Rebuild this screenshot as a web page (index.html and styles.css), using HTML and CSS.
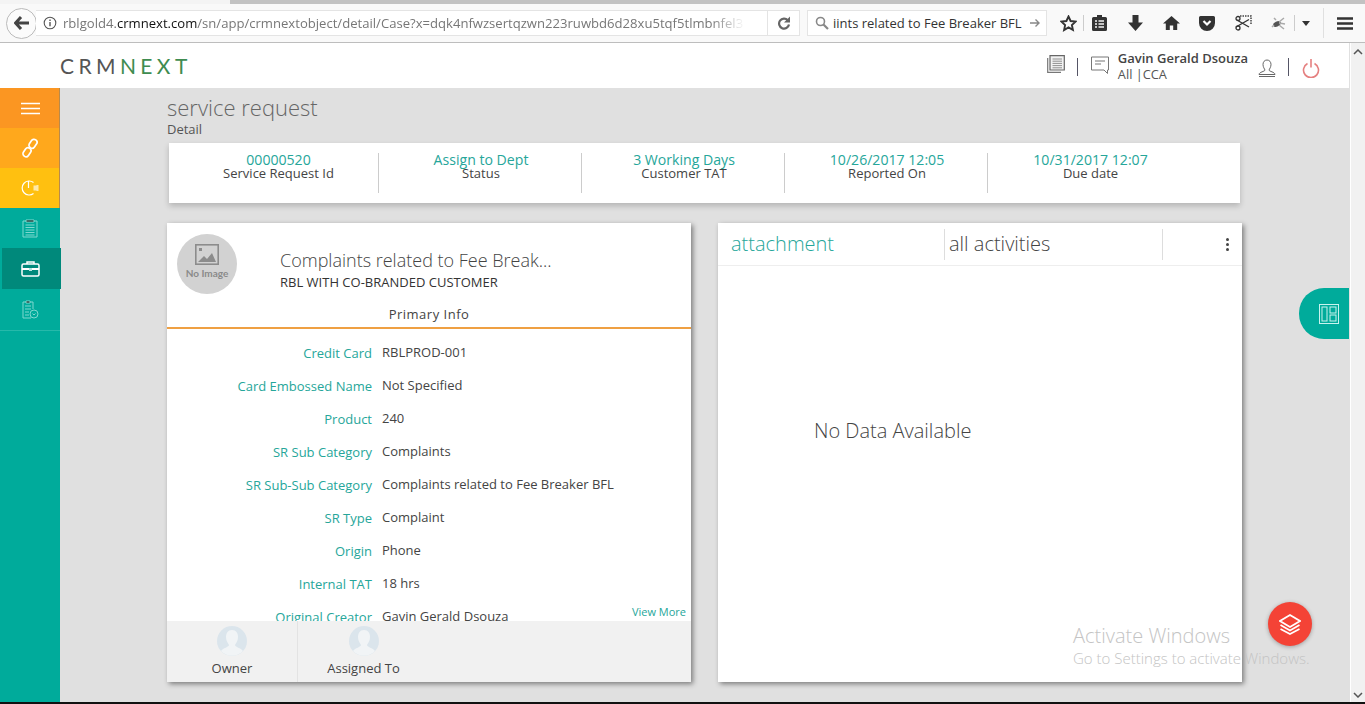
FILE: index.html
```html
<!DOCTYPE html>
<html lang="en">
<head>
    <meta charset="UTF-8">
    <title>service request</title>
    <link rel="stylesheet" href="styles.css">
</head>
<body>

<div class="tabstrip"><div class="tab-edge"></div></div>

<div class="toolbar">
    <div class="back-btn">
        <svg width="16" height="14" viewBox="0 0 16 14"><path d="M7 1 1.500 7 7 13M2 7h13" fill="none" stroke="#444" stroke-width="3"/></svg>
    </div>
    <div class="url-box">
        <svg class="info-icon" width="14" height="14" viewBox="0 0 14 14"><circle cx="7" cy="7" r="5.800" fill="none" stroke="#555" stroke-width="1.100"/><path d="M7 6v4.200M7 3.600v1.300" stroke="#555" stroke-width="1.400"/></svg>
        <div class="url-text">rblgold4.<b>crmnext.com</b>/sn/app/crmnextobject/detail/Case?x=dqk4nfwzsertqzwn223ruwbd6d28xu5tqf5tlmbnfel3</div>
        <div class="reload-cell">
            <svg width="14" height="14" viewBox="0 0 14 14"><path d="M10.800 4.200A5 5 0 1 0 12 8.500" fill="none" stroke="#666" stroke-width="2.200"/><path d="M13 .5v6H7z" fill="#666"/></svg>
        </div>
    </div>
    <div class="search-box">
        <svg width="14" height="14" viewBox="0 0 14 14"><circle cx="5.500" cy="5.500" r="4" fill="none" stroke="#888" stroke-width="1.600"/><path d="m8.500 8.500 4.500 4.500" stroke="#888" stroke-width="2.200"/></svg>
        <div class="search-text">iints related to Fee Breaker BFL</div>
        <svg width="12" height="12" viewBox="0 0 12 12"><path d="M1 6h9M6.500 2.500 10 6l-3.500 3.500" fill="none" stroke="#888" stroke-width="1.400"/></svg>
    </div>
    <div class="tool-icons">
        <div class="tool-cell cell-star">
            <svg width="17" height="17" viewBox="0 0 17 17"><path d="m8.500 1.500 2.100 4.500 4.900.6-3.600 3.400 1 4.900-4.400-2.500L4.100 15l1-4.900-3.600-3.500 4.900-.6z" fill="none" stroke="#333" stroke-width="1.900"/></svg>
        </div>
        <span class="tool-sep"></span>
        <div class="tool-cell cell-clip">
            <svg width="15" height="16" viewBox="0 0 15 16"><path d="M5 0h5v2h3.500A1.500 1.500 0 0 1 15 3.500v11a1.500 1.500 0 0 1-1.500 1.500h-12A1.500 1.500 0 0 1 0 14.500v-11A1.500 1.500 0 0 1 1.500 2H5z" fill="#333"/><path d="M3 6h2M6.500 6H12M3 9h2M6.500 9H12M3 12h2M6.500 12H12" stroke="#f4f4f4" stroke-width="1.300"/></svg>
        </div>
        <div class="tool-cell">
            <svg width="15" height="16" viewBox="0 0 15 16"><path d="M4.500 0h6v7.500H15L7.500 16 0 7.500h4.500z" fill="#333"/></svg>
        </div>
        <div class="tool-cell">
            <svg width="17" height="16" viewBox="0 0 17 16"><path d="M8.500 1 0 8.500h2.800V15h4v-4.500h3.400V15h4V8.500H17z" fill="#333"/></svg>
        </div>
        <div class="tool-cell">
            <svg width="16" height="15" viewBox="0 0 16 15"><path d="M1.500 0h13A1.500 1.500 0 0 1 16 1.500V7A8 8 0 0 1 0 7V1.500A1.500 1.500 0 0 1 1.500 0z" fill="#333"/><path d="m4.500 5 3.500 3.500L11.500 5" fill="none" stroke="#fff" stroke-width="2.200"/></svg>
        </div>
        <div class="tool-cell">
            <svg width="17" height="16" viewBox="0 0 17 16"><path d="M5 1h11v9" fill="none" stroke="#444" stroke-width="1.500" stroke-dasharray="1.500 1"/><path d="m1 4.500 13 7.500M1 12l13-7.500" stroke="#333" stroke-width="1.400"/><circle cx="3" cy="3.500" r="2" fill="none" stroke="#333" stroke-width="1.300"/><circle cx="3" cy="13" r="2" fill="none" stroke="#333" stroke-width="1.300"/></svg>
        </div>
        <div class="tool-cell cell-fly">
            <svg width="16" height="13" viewBox="0 0 16 13"><ellipse cx="6" cy="7" rx="4" ry="2.500" fill="#555" transform="rotate(-25 6 7)"/><path d="M8 5 13 1M8 6l6 1M8 8l5 4M3 8l-2 2M5 3l-2-2" stroke="#aaa" stroke-width="1.500"/></svg>
        </div>
        <span class="tool-sep"></span>
        <div class="tool-cell cell-caret">
            <svg width="8" height="5" viewBox="0 0 8 5"><path d="M0 0h8L4 5z" fill="#333"/></svg>
        </div>
        <span class="tool-sep tall"></span>
        <div class="tool-cell cell-menu">
            <svg width="16" height="13" viewBox="0 0 16 13"><path d="M0 1.500h16M0 6.500h16M0 11.500h16" stroke="#333" stroke-width="2.600"/></svg>
        </div>
    </div>
</div>

<div class="window">
    <div class="page">
        <header class="app-header">
            <div class="logo">CRM<span>NEXT</span></div>
            <div class="header-right">
                <svg class="doc-icon" width="18" height="18" viewBox="0 0 18 18"><path d="M.7 3v14.300H14" fill="none" stroke="#777" stroke-width="1.200"/><path d="M3 .7h14.300V15H3z" fill="#f2f2f2" stroke="#666" stroke-width="1.200"/><path d="M5.500 4h9.500M5.500 6.200h9.500M5.500 8.400h9.500M5.500 10.600h9.500M5.500 12.800h9.500" stroke="#777" stroke-width=".8"/></svg>
                <span class="head-sep"></span>
                <svg class="msg-icon" width="18" height="18" viewBox="0 0 18 18"><path d="M.5 1h17v13h-1v3.500l-3.500-3.500H.5z" fill="none" stroke="#777"/><path d="M4 5h10M4 8h6" stroke="#777"/></svg>
                <div class="user-info">
                    <div class="user-name">Gavin Gerald Dsouza</div>
                    <div class="user-role">All |CCA</div>
                </div>
                <svg class="person-icon" width="18" height="18" viewBox="0 0 18 18"><path d="M9 1c2.500 0 4 2 4 4.500S11.500 10 11 11c0 1.500 6 2 6 4.500H1C1 13 7 12.500 7 11c-.5-1-2-3-2-5.500S6.500 1 9 1zM1 17.500h16" fill="none" stroke="#666"/></svg>
                <span class="head-sep"></span>
                <svg class="power-icon" width="18" height="19" viewBox="0 0 18 19"><path d="M5.500 4.500A7.500 7.500 0 1 0 12.500 4.500M9 0v8.500" fill="none" stroke="#e58080" stroke-width="1.600"/></svg>
            </div>
        </header>

        <div class="body-row">
            <nav class="sidebar">
                <div class="nav-item nav-orange">
                    <svg width="19" height="13" viewBox="0 0 19 13"><path d="M0 1.500h19M0 6.500h19M0 11.500h19" stroke="#fff" stroke-width="1.600"/></svg>
                </div>
                <div class="nav-item nav-amber">
                    <svg width="16" height="20" viewBox="0 0 16 20"><g fill="none" stroke="#fff" stroke-width="1.700"><rect x="8" y="1" width="6" height="9.500" rx="3" transform="rotate(35 11 5.750)"/><rect x="2" y="9.500" width="6" height="9.500" rx="3" transform="rotate(35 5 14.250)"/></g></svg>
                </div>
                <div class="nav-item nav-yellow">
                    <svg width="19" height="16" viewBox="0 0 19 16"><path d="M12.500 2.500A7 7 0 1 0 12.500 13.500M7.500 1v7" fill="none" stroke="#fff" stroke-width="1.200"/><path d="M12.500 5.500h3v-.5h2v6h-2v-.5h-3z" fill="#ffe9a8"/></svg>
                </div>
                <div class="nav-item nav-teal">
                    <svg width="16" height="19" viewBox="0 0 16 19"><path d="M1 2h14v16H1z" fill="none" stroke="#7fd8cf"/><path d="M4 1h8v2H4zM3.500 6h9M3.500 8.500h9M3.500 11h9M3.500 13.500h9M3.500 16h9" stroke="#7fd8cf"/></svg>
                </div>
                <div class="nav-item nav-active">
                    <svg width="19" height="16" viewBox="0 0 19 16"><path d="M6 3V1h7v2" fill="none" stroke="#fff" stroke-width="1.500"/><rect x="1" y="3" width="17" height="12" rx="1.500" fill="none" stroke="#fff" stroke-width="1.500"/><path d="M1 8h17" stroke="#fff" stroke-width="2"/><path d="M8 7h3v3H8z" fill="#b5e6e0"/></svg>
                </div>
                <div class="nav-item nav-teal nav-last">
                    <svg width="17" height="19" viewBox="0 0 17 19"><path d="M11 9V2H1v16h8" fill="none" stroke="#7fd8cf"/><path d="M4 1h4v2H4zM3 6h6M3 9h6M3 12h4M3 15h4" stroke="#7fd8cf"/><circle cx="12" cy="14" r="4" fill="none" stroke="#7fd8cf"/><path d="m10.500 13.500 1.500 1.500 1.500-1.500" fill="none" stroke="#7fd8cf"/></svg>
                </div>
            </nav>

            <main class="main">
                <div class="page-title">service request</div>
                <div class="page-sub">Detail</div>

                <div class="summary">
                    <div class="summary-col"><div class="summary-val">00000520</div><div class="summary-key">Service Request Id</div></div>
                    <div class="summary-col"><div class="summary-val">Assign to Dept</div><div class="summary-key">Status</div></div>
                    <div class="summary-col"><div class="summary-val">3 Working Days</div><div class="summary-key">Customer TAT</div></div>
                    <div class="summary-col"><div class="summary-val">10/26/2017 12:05</div><div class="summary-key">Reported On</div></div>
                    <div class="summary-col"><div class="summary-val">10/31/2017 12:07</div><div class="summary-key">Due date</div></div>
                </div>

                <div class="cards">
                    <section class="card info-card">
                        <div class="info-head">
                            <div class="no-image">
                                <svg width="24" height="21" viewBox="0 0 24 21"><rect x=".8" y=".8" width="22.400" height="19.400" fill="none" stroke="#8c8c8c" stroke-width="1.600"/><path d="M3 18l6-6 3 3 5-6 4 9z" fill="#8c8c8c"/><rect x="4" y="4" width="3" height="3" fill="#8c8c8c"/></svg>
                                <span>No Image</span>
                            </div>
                            <div class="info-titles">
                                <div class="info-title">Complaints related to Fee Break...</div>
                                <div class="info-subtitle">RBL WITH CO-BRANDED CUSTOMER</div>
                            </div>
                        </div>
                        <div class="info-tab">Primary Info</div>
                        <div class="fields">
                            <div class="field"><label>Credit Card</label><span>RBLPROD-001</span></div>
                            <div class="field"><label>Card Embossed Name</label><span>Not Specified</span></div>
                            <div class="field"><label>Product</label><span>240</span></div>
                            <div class="field"><label>SR Sub Category</label><span>Complaints</span></div>
                            <div class="field"><label>SR Sub-Sub Category</label><span>Complaints related to Fee Breaker BFL</span></div>
                            <div class="field"><label>SR Type</label><span>Complaint</span></div>
                            <div class="field"><label>Origin</label><span>Phone</span></div>
                            <div class="field"><label>Internal TAT</label><span>18 hrs</span></div>
                            <div class="field"><label>Original Creator</label><span>Gavin Gerald Dsouza</span></div>
                            <a class="view-more">View More</a>
                        </div>
                        <div class="people">
                            <div class="person person-owner">
                                <svg class="avatar" width="30" height="30" viewBox="0 0 30 30"><circle cx="15" cy="15" r="15" fill="#dbe5ec"/><path d="M15 4c4 0 6 3 6 7s-2 6-3 8c0 2 6 3 8 6a15 15 0 0 1-22 0c2-3 8-4 8-6-1-2-3-4-3-8s2-7 6-7z" fill="#f1f4f6"/></svg>
                                <div>Owner</div>
                            </div>
                            <div class="person person-assigned">
                                <svg class="avatar" width="30" height="30" viewBox="0 0 30 30"><circle cx="15" cy="15" r="15" fill="#dbe5ec"/><path d="M15 4c4 0 6 3 6 7s-2 6-3 8c0 2 6 3 8 6a15 15 0 0 1-22 0c2-3 8-4 8-6-1-2-3-4-3-8s2-7 6-7z" fill="#f1f4f6"/></svg>
                                <div>Assigned To</div>
                            </div>
                        </div>
                    </section>

                    <section class="card activity-card">
                        <div class="activity-tabs">
                            <div class="activity-tab tab-attach">attachment</div>
                            <div class="activity-tab tab-all">all activities</div>
                            <div class="activity-menu"><i></i><i></i><i></i></div>
                        </div>
                        <div class="no-data">No Data Available</div>
                    </section>
                </div>
            </main>
        </div>
    </div>

    <div class="scrollbar">
        <svg width="10" height="6" viewBox="0 0 10 6"><path d="M1 5l4-4 4 4" fill="none" stroke="#555" stroke-width="1.500"/></svg>
        <svg width="10" height="6" viewBox="0 0 10 6"><path d="M1 1l4 4 4-4" fill="none" stroke="#555" stroke-width="1.500"/></svg>
    </div>
</div>

<div class="bottom-edge"></div>

<!-- floating bits -->
<div class="layout-tab">
    <svg width="20" height="20" viewBox="0 0 20 20"><g fill="none" stroke="#c8f3ee" stroke-width="1"><rect x=".5" y=".5" width="19" height="19"/><rect x="3" y="3" width="5" height="14"/><rect x="11" y="3" width="6" height="6"/><rect x="11" y="11" width="6" height="6"/></g></svg>
</div>
<div class="fab">
    <svg width="22" height="22" viewBox="0 0 22 22"><path d="M11 2 21 8l-10 6L1 8z" fill="none" stroke="#fff" stroke-width="1.700"/><path d="m1.500 12 9.500 5.500 9.500-5.500M1.500 16l9.500 5 9.500-5" fill="none" stroke="#fff" stroke-width="1.700"/></svg>
</div>
<div class="watermark">
    <div class="wm-big">Activate Windows</div>
    <div class="wm-small">Go to Settings to activate Windows.</div>
</div>

</body>
</html>
```

FILE: styles.css
```css
html, body {
    margin: 0;
    height: 704px;
    overflow: hidden;
}

body {
    display: flex;
    flex-direction: column;
    font-family: "Open Sans", "Noto Sans", sans-serif;
    color: #444;
    background: #e0e0e0;
    position: relative;
}

/* browser chrome */
.tabstrip {
    height: 4px;
    background: #c2c2c2;
    flex: none;
}

.tab-edge {
    width: 230px;
    height: 4px;
    background: #f4f4f4;
}

.toolbar {
    height: 38px;
    flex: none;
    display: flex;
    align-items: center;
    background: #f9f9f9;
    border-bottom: 1px solid #bdbdbd;
    padding-left: 6px;
}

.back-btn {
    width: 29px;
    height: 29px;
    border: 1px solid #bbb;
    border-radius: 50%;
    background: #fbfbfb;
    display: flex;
    align-items: center;
    justify-content: center;
    flex: none;
    margin-right: -1px;
}

.url-box {
    width: 764px;
    height: 26px;
    flex: none;
    display: flex;
    align-items: center;
    background: #fff;
    border: 1px solid #e4e4e4;
    border-left: none;
    box-sizing: border-box;
    padding-left: 7px;
}

.info-icon {
    flex: none;
}

.url-text {
    width: 682px;
    margin-left: 6px;
    font-size: 13.100px;
    color: #777;
    white-space: nowrap;
    overflow: hidden;
    -webkit-mask-image: linear-gradient(to right, #000 95%, transparent);
    mask-image: linear-gradient(to right, #000 95%, transparent);
}

.url-text b {
    font-weight: 400;
    color: #111;
}

.reload-cell {
    margin-left: 22px;
    flex: 1;
    height: 24px;
    border-left: 1px solid #e4e4e4;
    display: flex;
    align-items: center;
    justify-content: center;
}

.search-box {
    width: 240px;
    height: 26px;
    flex: none;
    margin-left: 7px;
    display: flex;
    align-items: center;
    background: #fff;
    border: 1px solid #e4e4e4;
    box-sizing: border-box;
    padding: 0 5px 0 7px;
    font-size: 13px;
    color: #333;
}

.search-text {
    flex: 1;
    margin-left: 4px;
    white-space: nowrap;
    overflow: hidden;
}

.tool-icons {
    display: flex;
    align-items: center;
    margin-left: 3px;
}

.tool-cell {
    width: 36px;
    box-sizing: border-box;
    display: flex;
    align-items: center;
    justify-content: center;
    flex: none;
}

.cell-star { width: 33px; padding-left: 3px; }
.cell-clip { width: 33px; padding-right: 3px; }
.cell-fly { width: 33px; padding-left: 3px; }
.cell-caret { width: 28px; padding-right: 6px; }
.cell-menu { width: 41px; }

.tool-sep {
    width: 1px;
    height: 16px;
    background: #ccc;
    flex: none;
}

.tool-sep.tall {
    height: 30px;
    background: #e0e0e0;
}

/* page + scrollbar */
.window {
    flex: 1;
    display: flex;
    min-height: 0;
}

.page {
    flex: 1;
    display: flex;
    flex-direction: column;
    min-width: 0;
}

.scrollbar {
    width: 15px;
    margin-left: 1px;
    flex: none;
    background: #f1f1f1;
    display: flex;
    flex-direction: column;
    justify-content: space-between;
    align-items: center;
    padding: 6px 0 4px;
    box-sizing: border-box;
    border-left: 1px solid #fff;
}

.bottom-edge {
    height: 2px;
    flex: none;
    background: #111;
}

.app-header {
    height: 45px;
    flex: none;
    background: #fff;
    display: flex;
    align-items: center;
    justify-content: space-between;
    padding-left: 60px;
}

.logo {
    font-family: "Lato", sans-serif;
    font-size: 21px;
    letter-spacing: 4.400px;
    color: #555;
}

.logo span {
    color: #3f8c50;
}

.header-right {
    display: flex;
    align-items: center;
    padding-right: 29px;
}

.head-sep {
    width: 1px;
    height: 18px;
    background: #556;
    margin: 2px 13px 0 12px;
}

.doc-icon {
    margin-bottom: 4px;
}

.msg-icon {
    margin: 0 9px 2px 0;
}

.person-icon {
    margin-top: 4px;
}

.power-icon {
    margin-top: 5px;
}

.user-info {
    line-height: 16px;
    margin-right: 10px;
    white-space: nowrap;
}

.user-name {
    font-size: 13px;
    font-weight: 600;
    color: #444;
}

.user-role {
    font-size: 12.800px;
    color: #555;
}

.body-row {
    flex: 1;
    display: flex;
    min-height: 0;
}

/* left nav */
.sidebar {
    width: 60px;
    flex: none;
    background: #00ab9b;
}

.nav-item {
    height: 40px;
    display: flex;
    align-items: center;
    justify-content: center;
    box-sizing: border-box;
}

.nav-orange { background: #fb9622; box-shadow: inset -1px 0 0 #b98a4a; }
.nav-amber { background: #ffa81c; box-shadow: inset -1px 0 0 #b98a4a; }
.nav-yellow { background: #ffc010; box-shadow: inset -1px 0 0 #b98a4a; }

.nav-teal {
    background: #00ab9b;
}

.nav-last {
    height: 42px;
    border-bottom: 1px solid #26b9aa;
}

.nav-active {
    height: 41px;
    width: 59px;
    margin-left: 2px;
    padding-right: 2px;
    background: #00897b;
}

/* main column */
.main {
    flex: 1;
    min-width: 0;
    padding: 5px 0 0 107px;
}

.page-title {
    font-size: 22px;
    font-weight: 300;
    line-height: 28px;
    color: #666;
}

.page-sub {
    font-size: 13px;
    line-height: 16px;
    color: #555;
}

.summary {
    width: 1071px;
    height: 60px;
    margin: 6px 0 0 2px;
    display: grid;
    grid-template-columns: 210px repeat(4, 203px);
    background: #fff;
    box-shadow: 0 3px 6px rgba(0, 0, 0, .2);
    padding-top: 10px;
    box-sizing: border-box;
}

.summary-col {
    height: 40px;
    box-sizing: border-box;
    text-align: center;
    border-right: 1px solid #ccc;
    padding-left: 2px;
}

.summary-col:first-child {
    padding-left: 10px;
}

.summary-col:last-child {
    border-right: none;
}

.summary-val {
    font-size: 14.100px;
    line-height: 14px;
    color: #26a69a;
}

.summary-key {
    font-size: 13px;
    line-height: 13px;
    color: #444;
}

.cards {
    display: flex;
    gap: 27px;
    margin-top: 20px;
}

.card {
    height: 459px;
    background: #fff;
    box-shadow: 2px 2px 5px rgba(0, 0, 0, .45);
    position: relative;
}

.info-card {
    width: 524px;
    display: flex;
    flex-direction: column;
}

.info-head {
    height: 78px;
    display: flex;
    padding: 11px 0 0 10px;
    box-sizing: border-box;
    flex: none;
}

.no-image {
    width: 60px;
    height: 60px;
    flex: none;
    border-radius: 50%;
    background: #d2d2d2;
    display: flex;
    flex-direction: column;
    align-items: center;
    padding-top: 10px;
    box-sizing: border-box;
}

.no-image span {
    font-family: "Lato", sans-serif;
    font-size: 10px;
    font-weight: 700;
    color: #8a8a8a;
    white-space: nowrap;
    margin-top: 2px;
}

.info-titles {
    margin-left: 43px;
    padding-top: 14px;
}

.info-title {
    font-size: 18px;
    font-weight: 300;
    line-height: 25px;
    color: #444;
}

.info-subtitle {
    font-size: 13px;
    line-height: 19px;
    color: #333;
}

.info-tab {
    height: 28px;
    flex: none;
    box-sizing: border-box;
    border-bottom: 2px solid #efa043;
    font-size: 13px;
    line-height: 26px;
    letter-spacing: .5px;
    text-align: center;
    color: #444;
}

.fields {
    flex: 1;
    min-height: 0;
    overflow: hidden;
    position: relative;
    padding-top: 13px;
}

.field {
    height: 33px;
    display: grid;
    grid-template-columns: 205px 1fr;
    column-gap: 10px;
    font-size: 13px;
    line-height: 20px;
    white-space: nowrap;
}

.field label {
    text-align: right;
    color: #26a69a;
    padding-top: 1px;
}

.field span {
    color: #444;
}

.view-more {
    position: absolute;
    right: 5px;
    bottom: 1px;
    font-size: 11px;
    line-height: 16px;
    color: #26a69a;
}

.people {
    height: 61px;
    flex: none;
    background: #f1f1f1;
    display: flex;
    font-size: 13px;
    color: #444;
    text-align: center;
}

.person {
    box-sizing: border-box;
    padding-top: 5px;
}

.person-owner {
    width: 131px;
    border-right: 1px solid #e3e3e3;
}

.person-assigned {
    width: 131px;
}

.avatar {
    display: block;
    margin: 0 auto 3px;
}

.activity-card {
    width: 524px;
}

.activity-tabs {
    height: 42px;
    display: flex;
    border-bottom: 1px solid #eee;
    align-items: center;
}

.activity-tab {
    font-size: 20px;
    font-weight: 300;
    line-height: 29px;
    box-sizing: border-box;
    height: 31px;
}

.tab-attach {
    width: 227px;
    padding-left: 13px;
    color: #26a69a;
    border-right: 1px solid #ddd;
}

.tab-all {
    width: 218px;
    padding-left: 4px;
    color: #444;
    border-right: 1px solid #ddd;
}

.activity-menu {
    flex: 1;
    display: flex;
    flex-direction: column;
    align-items: center;
    gap: 2px;
    padding-left: 50px;
}

.activity-menu i {
    width: 3px;
    height: 3px;
    border-radius: 50%;
    background: #444;
}

.no-data {
    font-size: 20px;
    font-weight: 300;
    line-height: 26px;
    color: #444;
    margin: 152px 0 0 96px;
}

/* things floating over the page */
.layout-tab {
    position: absolute;
    left: 1299px;
    top: 288px;
    width: 50px;
    height: 51px;
    box-sizing: border-box;
    padding-left: 10px;
    background: #00ab9b;
    border-radius: 25px 0 0 25px;
    display: flex;
    align-items: center;
    justify-content: center;
}

.fab {
    position: absolute;
    left: 1268px;
    top: 602px;
    width: 44px;
    height: 44px;
    border-radius: 50%;
    background: #f44336;
    box-shadow: 0 1px 4px rgba(0, 0, 0, .3);
    display: flex;
    align-items: center;
    justify-content: center;
}

.watermark {
    position: absolute;
    left: 1073px;
    top: 623px;
    color: #c4c4c4;
    white-space: nowrap;
}

.wm-big {
    font-size: 20px;
    font-weight: 300;
    line-height: 26px;
}

.wm-small {
    font-size: 15px;
    font-weight: 300;
    line-height: 18px;
}
```
